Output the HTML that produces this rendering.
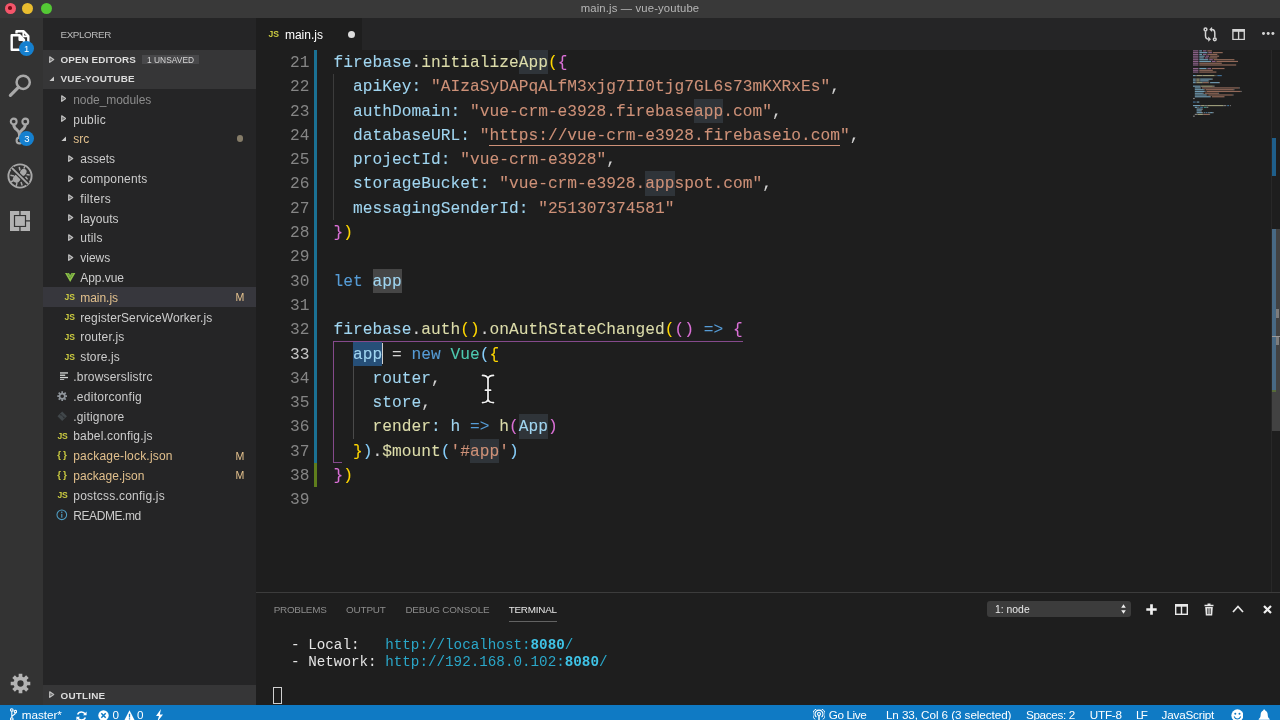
<!DOCTYPE html>
<html lang="en">
<head>
<meta charset="utf-8">
<title>main.js — vue-youtube</title>
<style>
*{box-sizing:border-box;margin:0;padding:0}
html,body{width:1280px;height:720px;overflow:hidden;background:#1e1e1e}
body{will-change:transform;font-family:"Liberation Sans",sans-serif;color:#ccc;position:relative}
.abs{position:absolute}
svg{display:block}
/* title bar */
#titlebar{left:0;top:0;width:1280px;height:18px;background:#393939}
#titlebar .t{position:absolute;left:0;right:0;top:0;height:17px;line-height:17px;text-align:center;font-size:11.3px;color:#b6b6b6}
.tl{position:absolute;top:2.6px;width:11px;height:11px;border-radius:50%}
.tl i{position:absolute;left:3.7px;top:3.7px;width:3.6px;height:3.6px;border-radius:50%;background:#7a0c16}
/* activity bar */
#activity{left:0;top:18px;width:43px;height:687px;background:#333333}
.badge-c{position:absolute;width:15px;height:15px;border-radius:50%;background:#1580cf;color:#fff;font-size:9.5px;line-height:15px;text-align:center}
/* sidebar */
#sidebar{left:43px;top:18px;width:213px;height:687px;background:#252526;overflow:hidden}
#sidebar .title{position:absolute;left:17.5px;top:0.5px;height:31.5px;line-height:32.5px;font-size:9.9px;color:#bbbbbb;letter-spacing:.15px}
.sechead{position:absolute;left:0;width:213px;height:19.8px;background:#363637;font-weight:bold;font-size:9.9px;line-height:20.4px;color:#dcdcdc}
.sechead span.l{position:absolute;left:17.5px;top:0;white-space:nowrap}
.sechead .badge{position:absolute;left:98.8px;top:5.2px;height:9.8px;line-height:10.4px;padding:0 5.2px;background:#48484a;color:#d6d6d6;font-weight:normal;font-size:8.4px;white-space:nowrap}
.ic{position:absolute}
.row{position:absolute;left:0;width:213px;height:19.8px;line-height:20.2px;font-size:12px;color:#cccccc;white-space:nowrap}
.selrow{background:#37373d}
.row .lb{position:absolute;top:0.8px}
.row .m{position:absolute;left:192.5px;top:0;font-size:10.6px;color:#e2c08d}
.row .dot{position:absolute;left:193.5px;top:6.6px;width:6.6px;height:6.6px;border-radius:50%;background:#857c68}
.js{position:absolute;top:0;font-weight:bold;font-size:8.6px;color:#cbcb41;letter-spacing:-.1px}
.json{position:absolute;top:-0.4px;font-weight:bold;font-size:9.8px;color:#cbcb41;letter-spacing:0}
/* editor */
#tabs{left:256px;top:18px;width:1024px;height:31.5px;background:#252526}
#tab{position:absolute;left:0;top:0;width:106px;height:31.5px;background:#1e1e1e}
#tab .tn{position:absolute;left:28.9px;top:0.7px;line-height:32.5px;font-size:12px;color:#ffffff}
#tab .dirty{position:absolute;left:91.5px;top:12.6px;width:7px;height:7px;border-radius:50%;background:#dcdcdc}
#code{left:256px;top:49.5px;width:1024px;height:543px;background:#1e1e1e;overflow:hidden}
.ln{position:absolute;left:0;width:53.5px;text-align:right;font-family:"Liberation Mono",monospace;font-size:16.2px;height:24.3px;line-height:26.8px;color:#858585;white-space:pre}
.cur-ln{color:#c6c6c6}
.cl{position:absolute;left:77.6px;-webkit-text-stroke:0.08px currentColor;font-family:"Liberation Mono",monospace;font-size:16.2px;height:24.3px;line-height:26.8px;color:#d4d4d4;letter-spacing:0.025px;white-space:pre}
.cl span{display:inline-block;height:24.3px;vertical-align:top}
.v{color:#a0d5f0}.f{color:#dcdcaa}.s{color:#ce9178}.k{color:#569cd6}.c{color:#4ec9b0}
.b1{color:#ffd700}.b2{color:#da70d6}.b3{color:#87cefa}
.hl{background:#2f3439}
.hl2{background:#464646}
.sel{background:#264f78}
.cl span.cur{width:0;position:relative}
.cl span.cur:after{content:"";position:absolute;left:-0.5px;top:1.5px;width:1.6px;height:21px;background:#d0d0d0}
.cl span.u{background:linear-gradient(#ce9178,#ce9178) 0 22.1px/100% 1px no-repeat}
/* panel */
#panel{left:256px;top:592px;width:1024px;height:113px;background:#1e1e1e;border-top:1px solid #3c3c3c}
.ptab{position:absolute;top:9.500px;height:14px;line-height:14px;font-size:9.9px;color:#8c8c8c;white-space:nowrap}
.ptab.on{color:#e7e7e7}
.term{position:absolute;left:18px;font-family:"Liberation Mono",monospace;font-size:14.25px;line-height:17px;height:17px;color:#e4e4e4;white-space:pre}
.tu{color:#2aa7c9}
.tu b{color:#3fc3e6}
/* status */
#status{left:0;top:705px;width:1280px;height:15px;background:#0f7ac4;overflow:hidden}
.st{position:absolute;top:2.4px;font-size:11.7px;line-height:16px;color:#fff;white-space:nowrap}

#status svg{margin-top:0.9px}

</style>
</head>
<body>

<div id="titlebar" class="abs">
  <div class="tl" style="left:4.500px;background:#f4556a"><i></i></div>
  <div class="tl" style="left:22.400px;background:#e9bd2f"></div>
  <div class="tl" style="left:40.500px;background:#54c835"></div>
  <div class="t" style="letter-spacing:0.142px">main.js — vue-youtube</div>
</div>

<div id="activity" class="abs">
  <!-- files -->
  <svg class="abs" style="left:9px;top:11px" width="22" height="23" viewBox="0 0 22 23"><g fill="none" stroke="#ffffff" stroke-width="2.4" stroke-linejoin="round"><path d="M7.5 4.500v-2.200h7.200l4.600 4.700v10.600h-3.500"/><path d="M14.300 2.500v4.800h4.800" stroke-width="1.800"/><path d="M2.700 6.200h7.800l4.500 4.600v10h-12.300z" fill="#333"/><path d="M10.200 6.400v4.700h4.600z" stroke-width="1.600" fill="#fff"/></g></svg>
  <div class="badge-c" style="left:19.2px;top:23px">1</div>
  <!-- search -->
  <svg class="abs" style="left:7.5px;top:55px" width="26" height="26" viewBox="0 0 26 26"><circle cx="15.200" cy="9.300" r="6.600" fill="none" stroke="#a8a8a8" stroke-width="2.500"/><path d="M10.600 14.200L2.400 22.300" stroke="#a8a8a8" stroke-width="3.200" stroke-linecap="round"/></svg>
  <!-- git -->
  <svg class="abs" style="left:8px;top:98px" width="24" height="30" viewBox="0 0 24 30"><g fill="none" stroke="#a8a8a8" stroke-width="2.100"><circle cx="5.700" cy="5.500" r="2.900"/><circle cx="17.300" cy="5.500" r="2.900"/><circle cx="11.500" cy="24.500" r="2.900"/><path d="M5.700 8.400c0 5.400 5.800 5 5.800 10v3.200M17.300 8.400c0 5.400-5.800 5-5.800 10" stroke-width="3"/></g></svg>
  <div class="badge-c" style="left:19.300px;top:112.500px">3</div>
  <!-- debug -->
  <svg class="abs" style="left:7px;top:145px" width="26" height="26" viewBox="0 0 26 26"><g fill="none" stroke="#a8a8a8"><circle cx="13" cy="13" r="11.600" stroke-width="1.900"/><ellipse cx="9.800" cy="15.600" rx="3.600" ry="4.300" transform="rotate(35 9.800 15.600)" fill="#a8a8a8" stroke="none"/><ellipse cx="16.300" cy="9.300" rx="3" ry="3.600" transform="rotate(35 16.300 9.300)" fill="#a8a8a8" stroke="none"/><path d="M7 13l-3.600-.8M6.600 17.500l-2.800 1.500M10 20l-.8 3M14 19l1.200 3.400M13 7.500L12.200 4M17 5.600l.8-2.400M19.500 11.500l3.200.4M18.500 13.800l2 2.600" stroke-width="1.500"/><path d="M4.800 4.800L21.200 21.200" stroke="#333" stroke-width="4.200"/><path d="M4.800 4.800L21.200 21.200" stroke-width="1.900"/></g></svg>
  <!-- extensions -->
  <svg class="abs" style="left:10px;top:192.500px" width="20" height="20" viewBox="0 0 20 20"><g fill="#b2b2b2"><path d="M0 0h9.300v3.900h-5.400v12.200h5.400v3.900h-9.300z"/><path d="M10.600 0h9.400v9.200h-3.900v-5.300h-5.500z"/><path d="M16.100 10.600h3.900v9.400h-9.400v-3.900h5.500z"/><rect x="5.100" y="5.100" width="9.800" height="9.800"/></g></svg>
  <!-- gear -->
  <svg class="abs" style="left:9.500px;top:654.500px" width="21" height="21" viewBox="0 0 24 24"><g fill="none" stroke="#b4b4b4"><circle cx="12" cy="12" r="5.800" stroke-width="4.400"/><path d="M12 0.800v4M12 19.200v4M0.800 12h4M19.200 12h4M4.100 4.100l2.800 2.800M17.100 17.100l2.800 2.800M4.100 19.900l2.800-2.800M17.100 6.900l2.800-2.800" stroke-width="4.200"/></g></svg>
</div>

<div id="sidebar" class="abs">
<div class="title" style="letter-spacing:-0.417px">EXPLORER</div>
<div class="sechead" style="top:31.5px"><svg class="ic" style="left:6.3px;top:6.3px" width="5.5" height="7.2" viewBox="0 0 5.5 7.2"><path d="M0.7 0.8 L4.7 3.6 L0.7 6.4 Z" fill="#6e6e6e" stroke="#c2c2c2" stroke-width="1.15" stroke-linejoin="round"/></svg><span class="l" style="letter-spacing:0.079px">OPEN EDITORS</span><span class="badge" style="letter-spacing:0.032px">1 UNSAVED</span></div>
<div class="sechead" style="top:51.3px"><svg class="ic" style="left:6.3px;top:7.2px" width="5.4" height="5.4" viewBox="0 0 5.4 5.4"><path d="M5 0.4 L5 5 L0.4 5 Z" fill="#c8c8c8"/></svg><span class="l" style="letter-spacing:0.219px">VUE-YOUTUBE</span></div>
<div class="row" style="top:71.10px"><svg class="ic" style="left:17.7px;top:6.3px" width="5.5" height="7.2" viewBox="0 0 5.5 7.2"><path d="M0.7 0.8 L4.7 3.6 L0.7 6.4 Z" fill="#6e6e6e" stroke="#c2c2c2" stroke-width="1.15" stroke-linejoin="round"/></svg><span class="lb" style="left:30.25px;color:#8c8c8c;letter-spacing:-0.066px">node_modules</span></div>
<div class="row" style="top:90.90px"><svg class="ic" style="left:17.7px;top:6.3px" width="5.5" height="7.2" viewBox="0 0 5.5 7.2"><path d="M0.7 0.8 L4.7 3.6 L0.7 6.4 Z" fill="#6e6e6e" stroke="#c2c2c2" stroke-width="1.15" stroke-linejoin="round"/></svg><span class="lb" style="left:30.25px;color:#cccccc;letter-spacing:0.229px">public</span></div>
<div class="row" style="top:110.70px"><svg class="ic" style="left:18.0px;top:7.2px" width="5.4" height="5.4" viewBox="0 0 5.4 5.4"><path d="M5 0.4 L5 5 L0.4 5 Z" fill="#c8c8c8"/></svg><span class="lb" style="left:30.25px;color:#e2c08d;letter-spacing:0.002px">src</span><span class="dot"></span></div>
<div class="row" style="top:130.50px"><svg class="ic" style="left:25.0px;top:6.3px" width="5.5" height="7.2" viewBox="0 0 5.5 7.2"><path d="M0.7 0.8 L4.7 3.6 L0.7 6.4 Z" fill="#6e6e6e" stroke="#c2c2c2" stroke-width="1.15" stroke-linejoin="round"/></svg><span class="lb" style="left:37.25px;color:#cccccc;letter-spacing:0.014px">assets</span></div>
<div class="row" style="top:150.30px"><svg class="ic" style="left:25.0px;top:6.3px" width="5.5" height="7.2" viewBox="0 0 5.5 7.2"><path d="M0.7 0.8 L4.7 3.6 L0.7 6.4 Z" fill="#6e6e6e" stroke="#c2c2c2" stroke-width="1.15" stroke-linejoin="round"/></svg><span class="lb" style="left:37.25px;color:#cccccc;letter-spacing:0.181px">components</span></div>
<div class="row" style="top:170.10px"><svg class="ic" style="left:25.0px;top:6.3px" width="5.5" height="7.2" viewBox="0 0 5.5 7.2"><path d="M0.7 0.8 L4.7 3.6 L0.7 6.4 Z" fill="#6e6e6e" stroke="#c2c2c2" stroke-width="1.15" stroke-linejoin="round"/></svg><span class="lb" style="left:37.25px;color:#cccccc;letter-spacing:0.305px">filters</span></div>
<div class="row" style="top:189.90px"><svg class="ic" style="left:25.0px;top:6.3px" width="5.5" height="7.2" viewBox="0 0 5.5 7.2"><path d="M0.7 0.8 L4.7 3.6 L0.7 6.4 Z" fill="#6e6e6e" stroke="#c2c2c2" stroke-width="1.15" stroke-linejoin="round"/></svg><span class="lb" style="left:37.25px;color:#cccccc;letter-spacing:0.038px">layouts</span></div>
<div class="row" style="top:209.70px"><svg class="ic" style="left:25.0px;top:6.3px" width="5.5" height="7.2" viewBox="0 0 5.5 7.2"><path d="M0.7 0.8 L4.7 3.6 L0.7 6.4 Z" fill="#6e6e6e" stroke="#c2c2c2" stroke-width="1.15" stroke-linejoin="round"/></svg><span class="lb" style="left:37.25px;color:#cccccc;letter-spacing:0.227px">utils</span></div>
<div class="row" style="top:229.50px"><svg class="ic" style="left:25.0px;top:6.3px" width="5.5" height="7.2" viewBox="0 0 5.5 7.2"><path d="M0.7 0.8 L4.7 3.6 L0.7 6.4 Z" fill="#6e6e6e" stroke="#c2c2c2" stroke-width="1.15" stroke-linejoin="round"/></svg><span class="lb" style="left:37.25px;color:#cccccc;letter-spacing:-0.002px">views</span></div>
<div class="row" style="top:249.30px"><svg class="ic" style="left:22.4px;top:5.3px" width="10.4" height="9" viewBox="0 0 23 20"><path d="M0 0 L11.5 20 L23 0 L18.4 0 L11.5 12 L4.6 0 Z" fill="#8dc149"/><path d="M4.6 0 L11.5 12 L18.4 0 L14.2 0 L11.5 4.7 L8.8 0 Z" fill="#7cb342"/></svg><span class="lb" style="left:37.25px;color:#cccccc;letter-spacing:-0.047px">App.vue</span></div>
<div class="row selrow" style="top:269.10px"><span class="js" style="left:21.6px">JS</span><span class="lb" style="left:37.25px;color:#e2c08d;letter-spacing:-0.043px">main.js</span><span class="m">M</span></div>
<div class="row" style="top:288.90px"><span class="js" style="left:21.6px">JS</span><span class="lb" style="left:37.25px;color:#cccccc;letter-spacing:0.095px">registerServiceWorker.js</span></div>
<div class="row" style="top:308.70px"><span class="js" style="left:21.6px">JS</span><span class="lb" style="left:37.25px;color:#cccccc;letter-spacing:0.164px">router.js</span></div>
<div class="row" style="top:328.50px"><span class="js" style="left:21.6px">JS</span><span class="lb" style="left:37.25px;color:#cccccc;letter-spacing:0.132px">store.js</span></div>
<div class="row" style="top:348.30px"><svg class="ic" style="left:16.5px;top:5.6px" width="8.2" height="8.6" viewBox="0 0 8.2 8.6"><g fill="#d4d7d6"><rect x="0" y="0.3" width="8.2" height="1.3"/><rect x="0" y="2.6" width="5.2" height="1.3"/><rect x="0" y="4.9" width="8.2" height="1.3"/><rect x="0" y="7.2" width="4.2" height="1.3"/></g></svg><span class="lb" style="left:30.25px;color:#cccccc;letter-spacing:0.184px">.browserslistrc</span></div>
<div class="row" style="top:368.10px"><svg class="ic" style="left:14px;top:4.7px" width="10.4" height="10.4" viewBox="0 0 22 22"><g fill="none" stroke="#8f959b" stroke-width="3.6"><circle cx="11" cy="11" r="5.6"/></g><g stroke="#8f959b" stroke-width="3.6"><path d="M11 0.6v4M11 17.4v4M0.6 11h4M17.4 11h4M3.6 3.6l2.9 2.9M15.5 15.5l2.9 2.9M3.6 18.400l2.900-2.900M15.5 6.500l2.900-2.900"/></g></svg><span class="lb" style="left:30.25px;color:#cccccc;letter-spacing:0.260px">.editorconfig</span></div>
<div class="row" style="top:387.90px"><svg class="ic" style="left:14px;top:4.7px" width="10.4" height="10.4" viewBox="0 0 22 22"><path d="M11 1 L21 11 L11 21 L1 11 Z" fill="#41474a"/><path d="M8 7 L15 14" stroke="#2c3033" stroke-width="2"/><circle cx="8" cy="8" r="1.700" fill="#2c3033"/><circle cx="14.500" cy="13.500" r="1.700" fill="#2c3033"/></svg><span class="lb" style="left:30.25px;color:#cccccc;letter-spacing:0.181px">.gitignore</span></div>
<div class="row" style="top:407.70px"><span class="js" style="left:14.4px">JS</span><span class="lb" style="left:30.25px;color:#cccccc;letter-spacing:0.181px">babel.config.js</span></div>
<div class="row" style="top:427.50px"><span class="json" style="left:14.2px">{&#8201;}</span><span class="lb" style="left:30.25px;color:#e2c08d;letter-spacing:0.200px">package-lock.json</span><span class="m">M</span></div>
<div class="row" style="top:447.30px"><span class="json" style="left:14.2px">{&#8201;}</span><span class="lb" style="left:30.25px;color:#e2c08d;letter-spacing:0.048px">package.json</span><span class="m">M</span></div>
<div class="row" style="top:467.10px"><span class="js" style="left:14.4px">JS</span><span class="lb" style="left:30.25px;color:#cccccc;letter-spacing:0.216px">postcss.config.js</span></div>
<div class="row" style="top:486.90px"><svg class="ic" style="left:13.200px;top:4.100px" width="11.600" height="11.600" viewBox="0 0 24 24"><circle cx="12" cy="12" r="10" fill="none" stroke="#4f9ec4" stroke-width="2.2"/><rect x="10.800" y="10" width="2.400" height="8" fill="#4f9ec4"/><circle cx="12" cy="6.800" r="1.600" fill="#4f9ec4"/></svg><span class="lb" style="left:30.25px;color:#cccccc;letter-spacing:-0.418px">README.md</span></div>
<div class="sechead" style="top:667.2px;height:19.8px"><svg class="ic" style="left:6.3px;top:6.3px" width="5.5" height="7.2" viewBox="0 0 5.5 7.2"><path d="M0.7 0.8 L4.7 3.6 L0.7 6.4 Z" fill="#6e6e6e" stroke="#c2c2c2" stroke-width="1.15" stroke-linejoin="round"/></svg><span class="l" style="top:0.600px;letter-spacing:0.217px">OUTLINE</span></div>
</div>

<div id="tabs" class="abs">
  <div id="tab"><span class="js" style="left:12.600px;top:0;line-height:32.500px">JS</span><span class="tn" style="'+fit("main.js",12,37.9)+'">main.js</span><span class="dirty"></span></div>
  <svg class="abs" style="left:946.500px;top:8.800px" width="14" height="15" viewBox="0 0 14 15"><g fill="none" stroke="#d4d4d4" stroke-width="1.500"><circle cx="2.500" cy="2.500" r="1.400"/><path d="M2.500 4.200v4.400c0 2.400 1 3.600 3 3.600"/><circle cx="11.800" cy="12.300" r="1.400"/><path d="M11.800 10.600v-4.400c0-2.400-1-3.600-3-3.600"/></g><path d="M5.200 9.600l2.800 2.600-2.800 2.600z M9.100 -0.100l-2.800 2.600 2.800 2.600z" fill="#d4d4d4"/></svg>
  <svg class="abs" style="left:976.100px;top:10.600px" width="13.200" height="11.200" viewBox="0 0 13.200 11.600"><rect x="0.700" y="0.700" width="11.800" height="10.200" fill="none" stroke="#d4d4d4" stroke-width="1.400"/><rect x="0.700" y="0.700" width="11.800" height="2.200" fill="#d4d4d4"/><rect x="5.900" y="1" width="1.400" height="9.600" fill="#d4d4d4"/></svg>
  <div class="abs" style="left:1006.200px;top:14.400px;width:2.900px;height:2.900px;border-radius:50%;background:#d4d4d4;box-shadow:4.700px 0 0 #d4d4d4,9.400px 0 0 #d4d4d4"></div>
</div>

<div id="code" class="abs">
<div class="ln" style="top:0.40px">21</div>
<div class="cl" style="top:0.40px"><span class="v">firebase</span>.<span class="f">initialize</span><span class="f hl">App</span><span class="b1">(</span><span class="b2">{</span></div>
<div class="ln" style="top:24.70px">22</div>
<div class="cl" style="top:24.70px">  <span class="v">apiKey:</span> <span class="s">"AIzaSyDAPqALfM3xjg7II0tjg7GL6s73mKXRxEs"</span>,</div>
<div class="ln" style="top:49.00px">23</div>
<div class="cl" style="top:49.00px">  <span class="v">authDomain:</span> <span class="s">"vue-crm-e3928.firebase</span><span class="s hl">app</span><span class="s">.com"</span>,</div>
<div class="ln" style="top:73.30px">24</div>
<div class="cl" style="top:73.30px">  <span class="v">databaseURL:</span> <span class="s">"</span><span class="s u">https://vue-crm-e3928.firebaseio.com</span><span class="s">"</span>,</div>
<div class="ln" style="top:97.60px">25</div>
<div class="cl" style="top:97.60px">  <span class="v">projectId:</span> <span class="s">"vue-crm-e3928"</span>,</div>
<div class="ln" style="top:121.90px">26</div>
<div class="cl" style="top:121.90px">  <span class="v">storageBucket:</span> <span class="s">"vue-crm-e3928.</span><span class="s hl">app</span><span class="s">spot.com"</span>,</div>
<div class="ln" style="top:146.20px">27</div>
<div class="cl" style="top:146.20px">  <span class="v">messagingSenderId:</span> <span class="s">"251307374581"</span></div>
<div class="ln" style="top:170.50px">28</div>
<div class="cl" style="top:170.50px"><span class="b2">}</span><span class="b1">)</span></div>
<div class="ln" style="top:194.80px">29</div>
<div class="ln" style="top:219.10px">30</div>
<div class="cl" style="top:219.10px"><span class="k">let</span> <span class="v hl2">app</span></div>
<div class="ln" style="top:243.40px">31</div>
<div class="ln" style="top:267.70px">32</div>
<div class="cl" style="top:267.70px"><span class="v">firebase</span>.<span class="f">auth</span><span class="b1">()</span>.<span class="f">onAuthStateChanged</span><span class="b1">(</span><span class="b2">()</span> <span class="k">=&gt;</span> <span class="b2">{</span></div>
<div class="ln cur-ln" style="top:292.00px">33</div>
<div class="cl" style="top:292.00px">  <span class="v sel">app</span><span class="cur"></span> = <span class="k">new</span> <span class="c">Vue</span><span class="b3">(</span><span class="b1">{</span></div>
<div class="ln" style="top:316.30px">34</div>
<div class="cl" style="top:316.30px">    <span class="v">router</span>,</div>
<div class="ln" style="top:340.60px">35</div>
<div class="cl" style="top:340.60px">    <span class="v">store</span>,</div>
<div class="ln" style="top:364.90px">36</div>
<div class="cl" style="top:364.90px">    <span class="f">render</span><span class="v">:</span> <span class="v">h</span> <span class="k">=&gt;</span> <span class="f">h</span><span class="b2">(</span><span class="v hl">App</span><span class="b2">)</span></div>
<div class="ln" style="top:389.20px">37</div>
<div class="cl" style="top:389.20px">  <span class="b1">}</span><span class="b3">)</span>.<span class="f">$mount</span><span class="b3">(</span><span class="s">'#</span><span class="s hl">app</span><span class="s">'</span><span class="b3">)</span></div>
<div class="ln" style="top:413.50px">38</div>
<div class="cl" style="top:413.50px"><span class="b2">}</span><span class="b1">)</span></div>
<div class="ln" style="top:437.80px">39</div>
<div class="abs" style="left:58.3px;top:0;width:3px;height:413.5px;background:#1b7194"></div>
<div class="abs" style="left:58.3px;top:413.5px;width:3px;height:24.3px;background:#5f7e1c"></div>
<div class="abs" style="left:77.200px;top:24.7px;width:1px;height:145.8px;background:#3c3c3c"></div>
<div class="abs" style="left:96.800px;top:316.3px;width:1px;height:72.9px;background:#4a4a4a"></div>
<div class="abs" style="left:77.2px;top:291.0px;width:409.5px;height:1px;background:#854a8c"></div>
<div class="abs" style="left:77.200px;top:292.0px;width:1px;height:120.5px;background:#854a8c"></div>
<div class="abs" style="left:77.200px;top:412.0px;width:9px;height:1px;background:#854a8c"></div>
<svg class="abs" style="left:225px;top:324.600px" width="14" height="30" viewBox="0 0 14 30"><path d="M1.500 1.400c3.200 0 4.900.9 5.500 3.200.6-2.300 2.300-3.200 5.500-3.200M7 4.400v21.200M1.500 28.600c3.200 0 4.900-.9 5.500-3.200.6 2.300 2.300 3.200 5.500 3.200M4.400 16.200h5.200" fill="none" stroke="#141414" stroke-width="3.400" stroke-linecap="round"/><path d="M1.500 1.400c3.200 0 4.900.9 5.500 3.200.6-2.300 2.300-3.200 5.500-3.200M7 4.400v21.200M1.500 28.600c3.200 0 4.900-.9 5.500-3.200.6 2.300 2.300 3.200 5.500 3.200M4.400 16.200h5.200" fill="none" stroke="#f2f2f2" stroke-width="1.700" stroke-linecap="round"/></svg>
<svg class="abs" style="left:936.800px;top:0.400px" width="78" height="72" viewBox="0 0 78 72" opacity="0.66">
<rect x="0.00" y="0.30" width="5.40" height="1.150" fill="#c586c0"/>
<rect x="6.30" y="0.30" width="2.70" height="1.150" fill="#9cdcfe"/>
<rect x="9.90" y="0.30" width="3.60" height="1.150" fill="#c586c0"/>
<rect x="14.40" y="0.30" width="4.50" height="1.150" fill="#ce9178"/>
<rect x="0.00" y="2.06" width="5.40" height="1.150" fill="#c586c0"/>
<rect x="6.30" y="2.06" width="8.10" height="1.150" fill="#9cdcfe"/>
<rect x="15.30" y="2.06" width="3.60" height="1.150" fill="#c586c0"/>
<rect x="19.80" y="2.06" width="9.90" height="1.150" fill="#ce9178"/>
<rect x="0.00" y="3.83" width="5.40" height="1.150" fill="#c586c0"/>
<rect x="6.30" y="3.83" width="2.70" height="1.150" fill="#9cdcfe"/>
<rect x="9.90" y="3.83" width="3.60" height="1.150" fill="#c586c0"/>
<rect x="14.40" y="3.83" width="9.90" height="1.150" fill="#ce9178"/>
<rect x="0.00" y="5.59" width="5.40" height="1.150" fill="#c586c0"/>
<rect x="6.30" y="5.59" width="5.40" height="1.150" fill="#9cdcfe"/>
<rect x="12.60" y="5.59" width="3.60" height="1.150" fill="#c586c0"/>
<rect x="17.10" y="5.59" width="9.00" height="1.150" fill="#ce9178"/>
<rect x="0.00" y="7.36" width="5.40" height="1.150" fill="#c586c0"/>
<rect x="6.30" y="7.36" width="4.50" height="1.150" fill="#9cdcfe"/>
<rect x="11.70" y="7.36" width="3.60" height="1.150" fill="#c586c0"/>
<rect x="16.20" y="7.36" width="8.10" height="1.150" fill="#ce9178"/>
<rect x="0.00" y="9.12" width="5.40" height="1.150" fill="#c586c0"/>
<rect x="6.30" y="9.12" width="9.00" height="1.150" fill="#9cdcfe"/>
<rect x="16.20" y="9.12" width="3.60" height="1.150" fill="#c586c0"/>
<rect x="20.70" y="9.12" width="20.70" height="1.150" fill="#ce9178"/>
<rect x="0.00" y="10.89" width="5.40" height="1.150" fill="#c586c0"/>
<rect x="6.30" y="10.89" width="11.70" height="1.150" fill="#9cdcfe"/>
<rect x="18.90" y="10.89" width="3.60" height="1.150" fill="#c586c0"/>
<rect x="23.40" y="10.89" width="21.60" height="1.150" fill="#ce9178"/>
<rect x="0.00" y="12.65" width="5.40" height="1.150" fill="#c586c0"/>
<rect x="6.30" y="12.65" width="22.50" height="1.150" fill="#ce9178"/>
<rect x="0.00" y="14.42" width="5.40" height="1.150" fill="#c586c0"/>
<rect x="6.30" y="14.42" width="36.90" height="1.150" fill="#ce9178"/>
<rect x="0.00" y="17.95" width="5.40" height="1.150" fill="#c586c0"/>
<rect x="6.30" y="17.95" width="7.20" height="1.150" fill="#9cdcfe"/>
<rect x="14.40" y="17.95" width="3.60" height="1.150" fill="#c586c0"/>
<rect x="18.90" y="17.95" width="12.60" height="1.150" fill="#ce9178"/>
<rect x="0.00" y="19.71" width="5.40" height="1.150" fill="#c586c0"/>
<rect x="6.30" y="19.71" width="13.50" height="1.150" fill="#ce9178"/>
<rect x="0.00" y="21.48" width="5.40" height="1.150" fill="#c586c0"/>
<rect x="6.30" y="21.48" width="17.10" height="1.150" fill="#ce9178"/>
<rect x="0.00" y="25.01" width="2.70" height="1.150" fill="#9cdcfe"/>
<rect x="2.70" y="25.01" width="0.90" height="1.150" fill="#b0b0b0"/>
<rect x="3.60" y="25.01" width="5.40" height="1.150" fill="#dcdcaa"/>
<rect x="9.00" y="25.01" width="0.90" height="1.150" fill="#b0b0b0"/>
<rect x="9.90" y="25.01" width="11.70" height="1.150" fill="#dcdcaa"/>
<rect x="22.50" y="25.01" width="0.90" height="1.150" fill="#b0b0b0"/>
<rect x="24.30" y="25.01" width="4.50" height="1.150" fill="#569cd6"/>
<rect x="0.00" y="28.54" width="2.70" height="1.150" fill="#9cdcfe"/>
<rect x="2.70" y="28.54" width="0.90" height="1.150" fill="#b0b0b0"/>
<rect x="3.60" y="28.54" width="2.70" height="1.150" fill="#dcdcaa"/>
<rect x="6.30" y="28.54" width="0.90" height="1.150" fill="#b0b0b0"/>
<rect x="7.20" y="28.54" width="11.70" height="1.150" fill="#9cdcfe"/>
<rect x="18.90" y="28.54" width="0.90" height="1.150" fill="#b0b0b0"/>
<rect x="0.00" y="30.30" width="2.70" height="1.150" fill="#9cdcfe"/>
<rect x="2.70" y="30.30" width="0.90" height="1.150" fill="#b0b0b0"/>
<rect x="3.60" y="30.30" width="2.70" height="1.150" fill="#dcdcaa"/>
<rect x="6.30" y="30.30" width="0.90" height="1.150" fill="#b0b0b0"/>
<rect x="7.20" y="30.30" width="8.10" height="1.150" fill="#9cdcfe"/>
<rect x="15.30" y="30.30" width="0.90" height="1.150" fill="#b0b0b0"/>
<rect x="0.00" y="32.07" width="2.70" height="1.150" fill="#9cdcfe"/>
<rect x="2.70" y="32.07" width="0.90" height="1.150" fill="#b0b0b0"/>
<rect x="3.60" y="32.07" width="5.40" height="1.150" fill="#dcdcaa"/>
<rect x="9.00" y="32.07" width="0.90" height="1.150" fill="#b0b0b0"/>
<rect x="9.90" y="32.07" width="5.40" height="1.150" fill="#ce9178"/>
<rect x="15.30" y="32.07" width="0.90" height="1.150" fill="#b0b0b0"/>
<rect x="17.10" y="32.07" width="9.00" height="1.150" fill="#9cdcfe"/>
<rect x="26.10" y="32.07" width="0.90" height="1.150" fill="#b0b0b0"/>
<rect x="0.00" y="35.60" width="7.20" height="1.150" fill="#9cdcfe"/>
<rect x="7.20" y="35.60" width="0.90" height="1.150" fill="#b0b0b0"/>
<rect x="8.10" y="35.60" width="11.70" height="1.150" fill="#dcdcaa"/>
<rect x="19.80" y="35.60" width="1.80" height="1.150" fill="#b0b0b0"/>
<rect x="1.80" y="37.36" width="5.40" height="1.150" fill="#9cdcfe"/>
<rect x="7.20" y="37.36" width="0.90" height="1.150" fill="#b0b0b0"/>
<rect x="9.00" y="37.36" width="36.90" height="1.150" fill="#ce9178"/>
<rect x="45.90" y="37.36" width="0.90" height="1.150" fill="#b0b0b0"/>
<rect x="1.80" y="39.13" width="9.00" height="1.150" fill="#9cdcfe"/>
<rect x="10.80" y="39.13" width="0.90" height="1.150" fill="#b0b0b0"/>
<rect x="12.60" y="39.13" width="27.90" height="1.150" fill="#ce9178"/>
<rect x="40.50" y="39.13" width="0.90" height="1.150" fill="#b0b0b0"/>
<rect x="1.80" y="40.89" width="9.90" height="1.150" fill="#9cdcfe"/>
<rect x="11.70" y="40.89" width="0.90" height="1.150" fill="#b0b0b0"/>
<rect x="13.50" y="40.89" width="34.20" height="1.150" fill="#ce9178"/>
<rect x="47.70" y="40.89" width="0.90" height="1.150" fill="#b0b0b0"/>
<rect x="1.80" y="42.66" width="8.10" height="1.150" fill="#9cdcfe"/>
<rect x="9.90" y="42.66" width="0.90" height="1.150" fill="#b0b0b0"/>
<rect x="11.70" y="42.66" width="13.50" height="1.150" fill="#ce9178"/>
<rect x="25.20" y="42.66" width="0.90" height="1.150" fill="#b0b0b0"/>
<rect x="1.80" y="44.42" width="11.70" height="1.150" fill="#9cdcfe"/>
<rect x="13.50" y="44.42" width="0.90" height="1.150" fill="#b0b0b0"/>
<rect x="15.30" y="44.42" width="24.30" height="1.150" fill="#ce9178"/>
<rect x="39.60" y="44.42" width="0.90" height="1.150" fill="#b0b0b0"/>
<rect x="1.80" y="46.19" width="15.30" height="1.150" fill="#9cdcfe"/>
<rect x="17.10" y="46.19" width="0.90" height="1.150" fill="#b0b0b0"/>
<rect x="18.90" y="46.19" width="12.60" height="1.150" fill="#ce9178"/>
<rect x="0.00" y="47.95" width="1.80" height="1.150" fill="#b0b0b0"/>
<rect x="0.00" y="51.48" width="2.70" height="1.150" fill="#569cd6"/>
<rect x="3.60" y="51.48" width="2.70" height="1.150" fill="#9cdcfe"/>
<rect x="0.00" y="55.01" width="7.20" height="1.150" fill="#9cdcfe"/>
<rect x="7.20" y="55.01" width="0.90" height="1.150" fill="#b0b0b0"/>
<rect x="8.10" y="55.01" width="3.60" height="1.150" fill="#dcdcaa"/>
<rect x="11.70" y="55.01" width="2.70" height="1.150" fill="#b0b0b0"/>
<rect x="14.40" y="55.01" width="16.20" height="1.150" fill="#dcdcaa"/>
<rect x="30.60" y="55.01" width="2.70" height="1.150" fill="#b0b0b0"/>
<rect x="34.20" y="55.01" width="1.80" height="1.150" fill="#569cd6"/>
<rect x="36.90" y="55.01" width="0.90" height="1.150" fill="#b0b0b0"/>
<rect x="1.80" y="56.78" width="2.70" height="1.150" fill="#9cdcfe"/>
<rect x="5.40" y="56.78" width="0.90" height="1.150" fill="#b0b0b0"/>
<rect x="7.20" y="56.78" width="2.70" height="1.150" fill="#569cd6"/>
<rect x="10.80" y="56.78" width="2.70" height="1.150" fill="#4ec9b0"/>
<rect x="13.50" y="56.78" width="1.80" height="1.150" fill="#b0b0b0"/>
<rect x="3.60" y="58.54" width="5.40" height="1.150" fill="#9cdcfe"/>
<rect x="9.00" y="58.54" width="0.90" height="1.150" fill="#b0b0b0"/>
<rect x="3.60" y="60.31" width="4.50" height="1.150" fill="#9cdcfe"/>
<rect x="8.10" y="60.31" width="0.90" height="1.150" fill="#b0b0b0"/>
<rect x="3.60" y="62.07" width="5.40" height="1.150" fill="#9cdcfe"/>
<rect x="9.00" y="62.07" width="0.90" height="1.150" fill="#b0b0b0"/>
<rect x="10.80" y="62.07" width="0.90" height="1.150" fill="#9cdcfe"/>
<rect x="12.60" y="62.07" width="1.80" height="1.150" fill="#569cd6"/>
<rect x="15.30" y="62.07" width="0.90" height="1.150" fill="#9cdcfe"/>
<rect x="16.20" y="62.07" width="0.90" height="1.150" fill="#b0b0b0"/>
<rect x="17.10" y="62.07" width="2.70" height="1.150" fill="#9cdcfe"/>
<rect x="19.80" y="62.07" width="0.90" height="1.150" fill="#b0b0b0"/>
<rect x="1.80" y="63.84" width="2.70" height="1.150" fill="#b0b0b0"/>
<rect x="4.50" y="63.84" width="5.40" height="1.150" fill="#dcdcaa"/>
<rect x="9.90" y="63.84" width="0.90" height="1.150" fill="#b0b0b0"/>
<rect x="10.80" y="63.84" width="5.40" height="1.150" fill="#ce9178"/>
<rect x="16.20" y="63.84" width="0.90" height="1.150" fill="#b0b0b0"/>
<rect x="0.00" y="65.60" width="1.80" height="1.150" fill="#b0b0b0"/>
</svg>
<div class="abs" style="left:1014.6px;top:0.0px;width:1.0px;height:543.0px;background:#282828"></div>
<div class="abs" style="left:1015.6px;top:88.5px;width:4.2px;height:37.5px;background:#1f5f8b"></div>
<div class="abs" style="left:1015.6px;top:179.1px;width:8.8px;height:202.4px;background:#424242"></div>
<div class="abs" style="left:1015.6px;top:179.1px;width:4.2px;height:161.2px;background:#486984"></div>
<div class="abs" style="left:1015.6px;top:340.3px;width:4.2px;height:2.0px;background:#566b3a"></div>
<div class="abs" style="left:1019.6px;top:259.8px;width:3.2px;height:9.0px;background:#7c7c7c"></div>
<div class="abs" style="left:1019.6px;top:286.5px;width:3.2px;height:9.0px;background:#7c7c7c"></div>
<div class="abs" style="left:1015.6px;top:286.0px;width:8.8px;height:1.0px;background:#9a9a9a"></div>

</div>

<div id="panel" class="abs">
  <span class="ptab" style="left:17.700px;letter-spacing:-0.260px">PROBLEMS</span>
  <span class="ptab" style="left:89.900px;letter-spacing:-0.120px">OUTPUT</span>
  <span class="ptab" style="left:149.400px;letter-spacing:-0.164px">DEBUG CONSOLE</span>
  <span class="ptab on" style="left:252.700px;letter-spacing:-0.223px">TERMINAL</span>
  <div class="abs" style="left:252.700px;top:27.500px;width:48.500px;height:1px;background:#636363"></div>
  <div class="term" style="top:43.500px">  - Local:   <span class="tu">http://localhost:<b>8080</b>/</span></div>
  <div class="term" style="top:60.500px">  - Network: <span class="tu">http://192.168.0.102:<b>8080</b>/</span></div>
  <div class="abs" style="left:17.400px;top:93.600px;width:8.800px;height:17px;border:1px solid #d0d0d0"></div>
  <div class="abs sel-box" style="left:731px;top:7.800px;width:144px;height:16.500px;background:#3c3c3c;border-radius:3px"><span style="position:absolute;left:8px;top:0;line-height:17px;font-size:10.4px;color:#e8e8e8">1: node</span>
    <svg style="position:absolute;left:134px;top:3.5px" width="5" height="10" viewBox="0 0 5 10"><path d="M2.5 0.3 L4.8 3.8 L0.2 3.8Z M2.5 9.7 L4.8 6.2 L0.2 6.2Z" fill="#f0f0f0"/></svg></div>
  <svg class="abs" style="left:890px;top:10.7px" width="11" height="11" viewBox="0 0 11 11"><path d="M5.5 0.3v10.400M0.300 5.500h10.400" stroke="#f0f0f0" stroke-width="2.700" fill="none"/></svg>
  <svg class="abs" style="left:918.5px;top:10.7px" width="13" height="11" viewBox="0 0 13 11"><rect x="0.7" y="0.7" width="11.6" height="9.6" fill="none" stroke="#e8e8e8" stroke-width="1.4"/><rect x="0.7" y="0.7" width="11.6" height="2" fill="#e8e8e8"/><rect x="5.8" y="1" width="1.4" height="9" fill="#e8e8e8"/></svg>
  <svg class="abs" style="left:948px;top:9.7px" width="10" height="13" viewBox="0 0 10 13"><path d="M3.5 0.4h3v1.300h3v1.500h-9v-1.500h3z M1.200 4h7.600l-.6 8.600h-6.400z" fill="#e8e8e8"/><path d="M3.600 5.300v5.800M5 5.300v5.800M6.400 5.300v5.800" stroke="#1e1e1e" stroke-width=".7"/></svg>
  <svg class="abs" style="left:976px;top:12.2px" width="12" height="8" viewBox="0 0 12 8"><path d="M1 7 L6 1.500 L11 7" fill="none" stroke="#e8e8e8" stroke-width="1.7"/></svg>
  <svg class="abs" style="left:1007px;top:11.7px" width="9" height="9" viewBox="0 0 9 9"><path d="M1 1L8 8M8 1L1 8" stroke="#f0f0f0" stroke-width="2.2" fill="none"/></svg>
</div>

<div id="status" class="abs">
<svg class="abs" style="left:9.500px;top:2.500px" width="7" height="13" viewBox="0 0 7 13"><g fill="none" stroke="#fff" stroke-width="1.100"><circle cx="1.800" cy="2" r="1.300"/><circle cx="1.800" cy="11" r="1.300"/><circle cx="5.400" cy="3.600" r="1.200"/><path d="M1.800 3.300v6.400M5.400 4.800c0 2.400-3.600 2-3.600 4.400"/></g></svg>
<span class="st" style="left:21.8px;letter-spacing:-0.035px">master*</span>
<svg class="abs" style="left:75.500px;top:4px" width="11" height="12" viewBox="0 0 11 12"><g fill="none" stroke="#fff" stroke-width="1.500"><path d="M9.300 4.300A4.200 4.200 0 0 0 1.600 4.600"/><path d="M1.700 7.700A4.200 4.200 0 0 0 9.400 7.400"/></g><path d="M10.600 1.600v3.600h-3.600z M0.400 10.400v-3.600h3.600z" fill="#fff"/></svg>
<svg class="abs" style="left:98px;top:4.300px" width="11" height="11" viewBox="0 0 11 11"><circle cx="5.500" cy="5.500" r="5.200" fill="#fff"/><path d="M3.300 3.300l4.400 4.400M7.700 3.300l-4.400 4.400" stroke="#0f7ac4" stroke-width="1.500"/></svg>
<span class="st" style="left:112.5px;letter-spacing:0.000px">0</span>
<svg class="abs" style="left:123.500px;top:4.300px" width="11" height="11" viewBox="0 0 11 11"><path d="M5.500 0.300L10.800 10.600H0.200z" fill="#fff"/><path d="M5.500 3.800v3.600M5.500 8.300v1.300" stroke="#0f7ac4" stroke-width="1.300"/></svg>
<span class="st" style="left:137.0px;letter-spacing:0.000px">0</span>
<svg class="abs" style="left:155px;top:3px" width="9" height="13" viewBox="0 0 9 13"><path d="M6 0L1 7h3l-1.800 6L8 5.400h-3.200z" fill="#fff"/></svg>
<svg class="abs" style="left:813px;top:3.500px" width="12" height="12" viewBox="0 0 12 12"><g fill="none" stroke="#fff" stroke-width="1.100"><circle cx="6" cy="5" r="1.500"/><path d="M3.400 8.200A4 4 0 1 1 8.600 8.200"/><path d="M2 10.400A6.300 6.300 0 1 1 10 10.400" stroke-width="1"/><path d="M6 6.500v5.500" stroke-width="1.400"/></g></svg>
<span class="st" style="left:828.8px;letter-spacing:-0.404px">Go Live</span>
<span class="st" style="left:885.9px;letter-spacing:-0.074px">Ln 33, Col 6 (3 selected)</span>
<span class="st" style="left:1026.0px;letter-spacing:-0.342px">Spaces: 2</span>
<span class="st" style="left:1089.8px;letter-spacing:-0.237px">UTF-8</span>
<span class="st" style="left:1135.9px;letter-spacing:-1.554px">LF</span>
<span class="st" style="left:1161.6px;letter-spacing:-0.203px">JavaScript</span>
<svg class="abs" style="left:1230.600px;top:3.400px" width="12.800" height="12.800" viewBox="0 0 14 14"><circle cx="7" cy="7" r="6.600" fill="#fff"/><circle cx="4.700" cy="5.200" r="1.100" fill="#0f7ac4"/><circle cx="9.300" cy="5.200" r="1.100" fill="#0f7ac4"/><path d="M3.400 8.200c.8 2 2.200 2.800 3.600 2.800s2.800-.8 3.600-2.800" fill="none" stroke="#0f7ac4" stroke-width="1.200"/></svg>
<svg class="abs" style="left:1258px;top:3.600px" width="12.400" height="12.400" viewBox="0 0 14 14"><path d="M7 0.600c-.7 0-1.100.5-1.100 1.100C3.800 2.400 3 4.400 3 6.600c0 2.800-1 3.600-2.200 4.800v.8h12.400v-.8C12 10.200 11 9.400 11 6.600c0-2.200-.8-4.200-2.900-4.900C8.100 1.100 7.700.6 7 .6z" fill="#fff"/></svg>
</div>

</body>
</html>
